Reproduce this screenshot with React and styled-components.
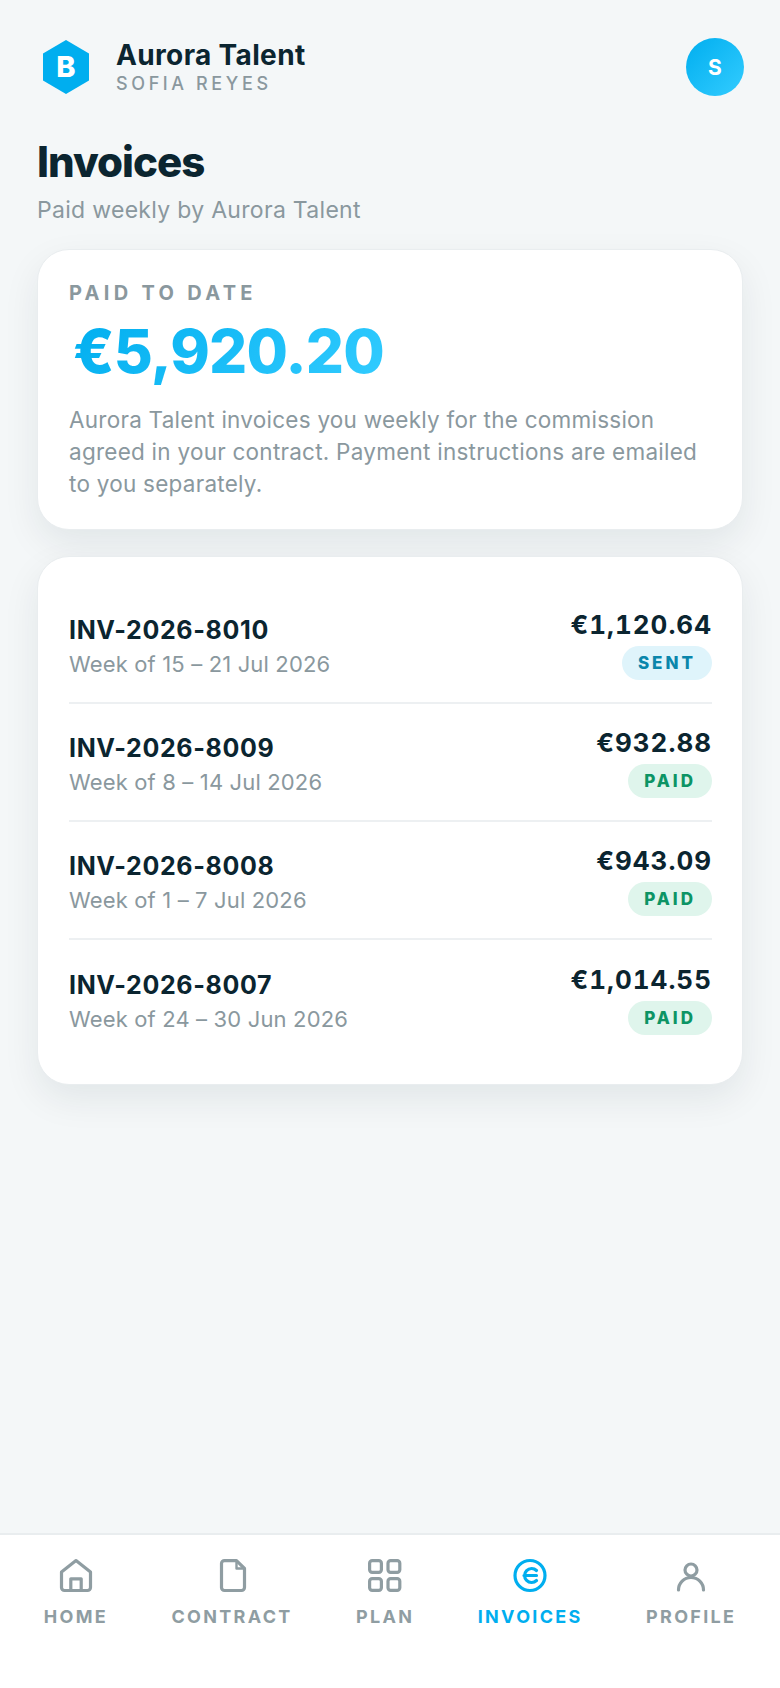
import React from "react";
import styled, { createGlobalStyle } from "styled-components";

const Global = createGlobalStyle`
  html, body { margin: 0; padding: 0; background: #f4f7f8; }
  body { font-family: Inter, "Noto Sans", sans-serif; -webkit-font-smoothing: antialiased; }
  * { box-sizing: border-box; }
`;

const Page = styled.div`
  width: 780px;
  height: 1688px;
  display: flex;
  flex-direction: column;
  background: #f4f7f8;
`;

const Main = styled.main`
  flex: 1;
  padding: 38px 37px 0;
`;

const Header = styled.header`
  display: flex;
  align-items: center;
  justify-content: space-between;
  padding-left: 6px;
  margin-right: -1px;
`;

const Brand = styled.div`
  display: flex;
  align-items: center;
  gap: 27px;
`;

const BrandText = styled.div`
  display: flex;
  flex-direction: column;
`;

const BrandName = styled.div`
  font-size: 28px;
  line-height: 34px;
  font-weight: 700;
  letter-spacing: 0.35px;
  color: #0b2530;
`;

const UserName = styled.div`
  font-size: 18px;
  line-height: 24px;
  font-weight: 500;
  letter-spacing: 3.6px;
  color: #8a989e;
`;

const Avatar = styled.div`
  width: 58px;
  height: 58px;
  border-radius: 50%;
  background: linear-gradient(135deg, #00aeef, #33ccff);
  color: #fff;
  font-size: 21px;
  font-weight: 700;
  display: flex;
  align-items: center;
  justify-content: center;
`;

const Title = styled.h1`
  margin: 38px 0 0;
  font-size: 42px;
  line-height: 56px;
  font-weight: 800;
  letter-spacing: -1px;
  color: #0b2530;
`;

const Subtitle = styled.p`
  margin: 4px 0 0;
  font-size: 23px;
  line-height: 32px;
  letter-spacing: 0.3px;
  color: #8a989e;
`;

const Card = styled.section`
  background: #fff;
  border: 1px solid #e9edef;
  border-radius: 32px;
  box-shadow: 0 14px 36px rgba(11, 37, 48, 0.08);
`;

const HeroCard = styled(Card)`
  margin-top: 23px;
  padding: 30px 31px 29px;
`;

const HeroLabel = styled.div`
  font-size: 20px;
  line-height: 26px;
  font-weight: 700;
  letter-spacing: 4.3px;
  color: #8a989e;
`;

const HeroAmount = styled.div`
  display: inline-block;
  margin: 7px 0 0 4px;
  font-size: 60px;
  line-height: 76px;
  font-weight: 800;
  letter-spacing: -0.8px;
  background: linear-gradient(135deg, #00aeef, #33ccff);
  -webkit-background-clip: text;
  background-clip: text;
  color: transparent;
`;

const HeroText = styled.p`
  margin: 15px 0 0;
  font-size: 22.5px;
  line-height: 32px;
  letter-spacing: 0.25px;
  color: #8a989e;
`;

const ListCard = styled(Card)`
  margin-top: 26px;
  padding: 29px 30px 26px 31px;
`;

const Row = styled.div`
  display: flex;
  justify-content: space-between;
  align-items: center;
  height: 118px;
  border-bottom: ${(p) => (p.$last ? "none" : "2px solid #edf0f2")};
`;

const RowLeft = styled.div`
  display: flex;
  flex-direction: column;
  gap: 3px;
  padding-top: 5px;
`;

const InvoiceNumber = styled.div`
  font-size: 25px;
  line-height: 32px;
  font-weight: 700;
  letter-spacing: 0.65px;
  color: #0b2530;
`;

const InvoiceWeek = styled.div`
  font-size: 22px;
  line-height: 30px;
  letter-spacing: 0.15px;
  color: #8a989e;
`;

const RowRight = styled.div`
  display: flex;
  flex-direction: column;
  align-items: flex-end;
  gap: 4px;
`;

const Amount = styled.div`
  font-size: 26px;
  line-height: 34px;
  font-weight: 700;
  letter-spacing: 1px;
  font-variant-numeric: tabular-nums;
  color: #0b2530;
`;

const Badge = styled.span`
  display: inline-flex;
  align-items: center;
  height: 34px;
  padding: 0 16px;
  border-radius: 17px;
  font-size: 17px;
  font-weight: 800;
  letter-spacing: 3px;
  background: ${(p) => (p.$status === "SENT" ? "#dff4fb" : "#dff5ec")};
  color: ${(p) => (p.$status === "SENT" ? "#0a86ab" : "#0d9465")};
`;

const Nav = styled.nav`
  height: 155px;
  background: #fff;
  border-top: 2px solid #e9edef;
  padding: 23px 12px 0;
  display: flex;
  justify-content: space-around;
  align-items: flex-start;
`;

const NavItem = styled.div`
  display: flex;
  flex-direction: column;
  align-items: center;
  gap: 11px;
  color: ${(p) => (p.$active ? "#00aeef" : "#8f9da2")};
`;

const NavLabel = styled.span`
  font-size: 18px;
  line-height: 24px;
  font-weight: 700;
  letter-spacing: 2.3px;
`;

const Icon = styled.svg`
  width: 36px;
  height: 36px;
  fill: none;
  stroke: currentColor;
  stroke-width: 3.2;
  stroke-linecap: round;
  stroke-linejoin: round;
`;

const HomeIcon = () => (
  <Icon viewBox="0 0 36 36">
    <path d="M18 2.6 32.5 14V29.5a3 3 0 0 1-3 3H6.5a3 3 0 0 1-3-3V14Z" />
    <path d="M12.8 32V20.8h10.4V32" />
  </Icon>
);

const FileIcon = () => (
  <Icon viewBox="0 0 36 36">
    <path d="M10.5 2.6H22.5L30.5 10.5V29.5a3 3 0 0 1-3 3h-17a3 3 0 0 1-3-3V5.6a3 3 0 0 1 3-3Z" />
    <path d="M22.5 3V10.5H30" strokeWidth="2.4" />
  </Icon>
);

const GridIcon = () => (
  <Icon viewBox="0 0 36 36">
    <rect x="2.6" y="2.6" width="11.8" height="11.8" rx="2.6" />
    <rect x="21" y="2.6" width="11.8" height="11.8" rx="2.6" />
    <rect x="2.6" y="20.6" width="11.8" height="11.8" rx="2.6" />
    <rect x="21" y="20.6" width="11.8" height="11.8" rx="2.6" />
  </Icon>
);

const EuroIcon = () => (
  <Icon viewBox="0 0 36 36">
    <circle cx="18" cy="17.5" r="15" />
    <path d="M24.5 12.5A7 7 0 1 0 24.5 22.5M12 17.5H24.5" />
  </Icon>
);

const UserIcon = () => (
  <Icon viewBox="0 0 36 36">
    <circle cx="18" cy="12" r="6" />
    <path d="M5.5 32a12.5 12.5 0 0 1 25 0" />
  </Icon>
);

const Logo = () => (
  <svg width="46" height="54" viewBox="0 0 46 54">
    <polygon points="23,0 46,13.5 46,40.5 23,54 0,40.5 0,13.5" fill="#00aeef" />
    <text x="23" y="37" textAnchor="middle" fontFamily="Inter, sans-serif" fontSize="29" fontWeight="800" fill="#fff">
      B
    </text>
  </svg>
);

const invoices = [
  { id: "INV-2026-8010", week: "Week of 15 – 21 Jul 2026", amount: "€1,120.64", status: "SENT" },
  { id: "INV-2026-8009", week: "Week of 8 – 14 Jul 2026", amount: "€932.88", status: "PAID" },
  { id: "INV-2026-8008", week: "Week of 1 – 7 Jul 2026", amount: "€943.09", status: "PAID" },
  { id: "INV-2026-8007", week: "Week of 24 – 30 Jun 2026", amount: "€1,014.55", status: "PAID" },
];

const tabs = [
  { label: "HOME", icon: <HomeIcon /> },
  { label: "CONTRACT", icon: <FileIcon /> },
  { label: "PLAN", icon: <GridIcon /> },
  { label: "INVOICES", icon: <EuroIcon />, active: true },
  { label: "PROFILE", icon: <UserIcon /> },
];

export default function App() {
  return (
    <Page>
      <Global />
      <Main>
        <Header>
          <Brand>
            <Logo />
            <BrandText>
              <BrandName>Aurora Talent</BrandName>
              <UserName>SOFIA REYES</UserName>
            </BrandText>
          </Brand>
          <Avatar>S</Avatar>
        </Header>
        <Title>Invoices</Title>
        <Subtitle>Paid weekly by Aurora Talent</Subtitle>
        <HeroCard>
          <HeroLabel>PAID TO DATE</HeroLabel>
          <HeroAmount>€5,920.20</HeroAmount>
          <HeroText>
            Aurora Talent invoices you weekly for the commission agreed in your contract. Payment instructions are
            emailed to you separately.
          </HeroText>
        </HeroCard>
        <ListCard>
          {invoices.map((inv, i) => (
            <Row key={inv.id} $last={i === invoices.length - 1}>
              <RowLeft>
                <InvoiceNumber>{inv.id}</InvoiceNumber>
                <InvoiceWeek>{inv.week}</InvoiceWeek>
              </RowLeft>
              <RowRight>
                <Amount>{inv.amount}</Amount>
                <Badge $status={inv.status}>{inv.status}</Badge>
              </RowRight>
            </Row>
          ))}
        </ListCard>
      </Main>
      <Nav>
        {tabs.map((t) => (
          <NavItem key={t.label} $active={t.active}>
            {t.icon}
            <NavLabel>{t.label}</NavLabel>
          </NavItem>
        ))}
      </Nav>
    </Page>
  );
}
